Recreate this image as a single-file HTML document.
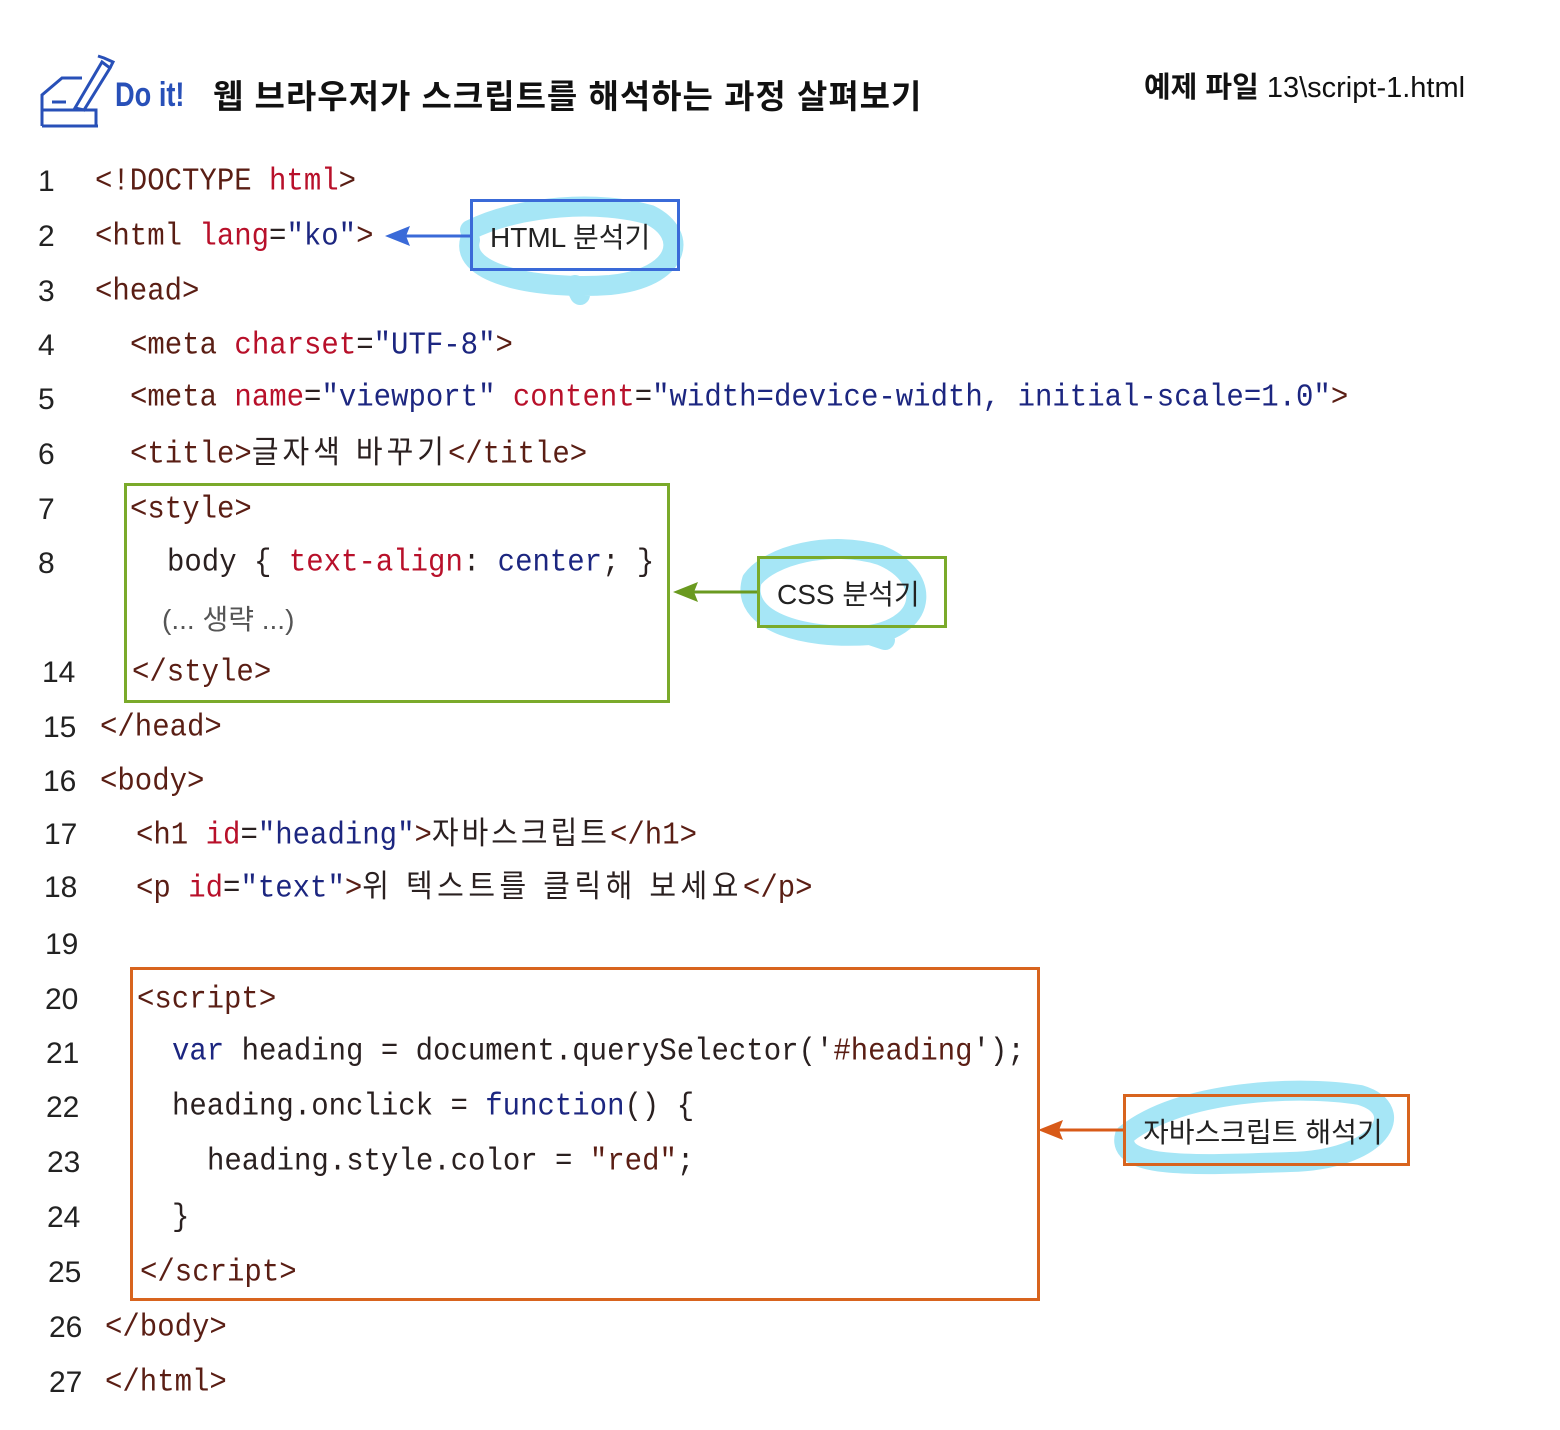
<!DOCTYPE html>
<html><head><meta charset="utf-8"><style>
body{margin:0;width:1560px;height:1430px;background:#fff;position:relative;overflow:hidden;font-family:"Liberation Mono","Noto Sans CJK KR",monospace;}
.l{position:absolute;font-size:29px;line-height:40px;white-space:pre;color:#2a2020;transform:scaleY(1.08);transform-origin:left center}
.n{position:absolute;font-family:"Liberation Sans",sans-serif;font-size:30px;line-height:40px;color:#222}
.t{color:#5a1e14}.a{color:#b8102a}.v{color:#1c2680}
.k{font-family:"Liberation Sans","Noto Sans CJK KR",sans-serif;letter-spacing:4px}
.box{position:absolute;border:3px solid}
.lab{position:absolute;font-family:"Liberation Sans","Noto Sans CJK KR",sans-serif;font-size:28px;color:#222;white-space:nowrap}
</style></head><body>
<svg style="position:absolute;left:0;top:0" width="1560" height="1430">
<g fill="none" stroke="#a6e6f6" stroke-width="20" stroke-linecap="round">
<path d="M470 240 C460 275 540 290 610 285 C680 278 690 235 650 215 C600 200 520 205 470 230 M575 285 L580 295"/>
<path d="M752 580 C740 620 800 640 870 635 C930 625 930 575 880 555 C830 540 770 555 752 580 M870 635 L885 640"/>
<path d="M1125 1135 C1115 1170 1200 1165 1290 1162 C1380 1160 1410 1110 1360 1095 C1300 1085 1180 1090 1125 1135"/>
</g>
<g fill="none" stroke="#2850b8" stroke-width="3">
<path d="M42 126 V95 L62 78 H82 M42 110 H96 V126 M42 126 H98 M52 102 H66"/>
<path d="M75 108 L102 62 L110 68 L84 110 Z M98 56 L104 58 L113 62 L110 68"/>
</g>
<path d="M470 236 H400" stroke="#3a6ad8" stroke-width="3"/><path d="M385 236 L410 226 L406 236 L410 246 Z" fill="#3a6ad8"/>
<path d="M758 592 H690" stroke="#6a9a20" stroke-width="3"/><path d="M673 592 L698 582 L694 592 L698 602 Z" fill="#6a9a20"/>
<path d="M1124 1130 H1055" stroke="#d85a18" stroke-width="3"/><path d="M1038 1130 L1063 1120 L1059 1130 L1063 1140 Z" fill="#d85a18"/>
</svg>
<div style="position:absolute;left:115px;top:76px;font-family:'Liberation Sans',sans-serif;font-weight:bold;font-size:34px;color:#2850b8;transform:scaleX(.8);transform-origin:left">Do it!</div>
<div class="lab" style="left:213px;top:70px;font-size:33px;font-weight:bold;color:#111;letter-spacing:1px">웹 브라우저가 스크립트를 해석하는 과정 살펴보기</div>
<div class="lab" style="left:1144px;top:64px;font-size:29px;color:#111"><b>예제 파일</b> 13\script-1.html</div>

<div class="box" style="left:470px;top:199px;width:204px;height:66px;border-color:#3a6ad8"></div>
<div class="lab" style="left:490px;top:216px">HTML 분석기</div>
<div class="box" style="left:124px;top:483px;width:540px;height:214px;border-color:#7aaa2a"></div>
<div class="box" style="left:757px;top:556px;width:184px;height:66px;border-color:#7aaa2a"></div>
<div class="lab" style="left:777px;top:573px">CSS 분석기</div>
<div class="box" style="left:130px;top:967px;width:904px;height:328px;border-color:#d8641e"></div>
<div class="box" style="left:1123px;top:1094px;width:281px;height:66px;border-color:#d8641e"></div>
<div class="lab" style="left:1143px;top:1111px">자바스크립트 해석기</div>

<div class="n" style="left:38px;top:162px">1</div><div class="l" style="left:95px;top:162px"><span class="t">&lt;!DOCTYPE </span><span class="a">html</span><span class="t">&gt;</span></div>
<div class="n" style="left:38px;top:217px">2</div><div class="l" style="left:95px;top:217px"><span class="t">&lt;html </span><span class="a">lang</span>=<span class="v">"ko"</span><span class="t">&gt;</span></div>
<div class="n" style="left:38px;top:272px">3</div><div class="l" style="left:95px;top:272px"><span class="t">&lt;head&gt;</span></div>
<div class="n" style="left:38px;top:326px">4</div><div class="l" style="left:130px;top:326px"><span class="t">&lt;meta </span><span class="a">charset</span>=<span class="v">"UTF-8"</span><span class="t">&gt;</span></div>
<div class="n" style="left:38px;top:380px">5</div><div class="l" style="left:130px;top:378px"><span class="t">&lt;meta </span><span class="a">name</span>=<span class="v">"viewport"</span> <span class="a">content</span>=<span class="v">"width=device-width, initial-scale=1.0"</span><span class="t">&gt;</span></div>
<div class="n" style="left:38px;top:435px">6</div><div class="l" style="left:130px;top:433px"><span class="t">&lt;title&gt;</span><span class="k">글자색 바꾸기</span><span class="t">&lt;/title&gt;</span></div>
<div class="n" style="left:38px;top:490px">7</div><div class="l" style="left:130px;top:490px"><span class="t">&lt;style&gt;</span></div>
<div class="n" style="left:38px;top:544px">8</div><div class="l" style="left:167px;top:543px">body { <span class="a">text-align</span>: <span class="v">center</span>; }</div>
<div class="lab" style="left:162px;top:598px;font-size:28px;color:#555">(... 생략 ...)</div>
<div class="n" style="left:42px;top:653px">14</div><div class="l" style="left:132px;top:653px"><span class="t">&lt;/style&gt;</span></div>
<div class="n" style="left:43px;top:708px">15</div><div class="l" style="left:100px;top:708px"><span class="t">&lt;/head&gt;</span></div>
<div class="n" style="left:43px;top:762px">16</div><div class="l" style="left:100px;top:762px"><span class="t">&lt;body&gt;</span></div>
<div class="n" style="left:44px;top:815px">17</div><div class="l" style="left:136px;top:814px"><span class="t">&lt;h1 </span><span class="a">id</span>=<span class="v">"heading"</span><span class="t">&gt;</span><span class="k" style="letter-spacing:3px">자바스크립트</span><span class="t">&lt;/h1&gt;</span></div>
<div class="n" style="left:44px;top:868px">18</div><div class="l" style="left:136px;top:867px"><span class="t">&lt;p </span><span class="a">id</span>=<span class="v">"text"</span><span class="t">&gt;</span><span class="k" style="letter-spacing:4.5px">위 텍스트를 클릭해 보세요</span><span class="t">&lt;/p&gt;</span></div>
<div class="n" style="left:45px;top:925px">19</div>
<div class="n" style="left:45px;top:980px">20</div><div class="l" style="left:137px;top:980px"><span class="t">&lt;script&gt;</span></div>
<div class="n" style="left:46px;top:1034px">21</div><div class="l" style="left:172px;top:1032px"><span class="v">var</span> heading = document.querySelector('<span class="t">#heading</span>');</div>
<div class="n" style="left:46px;top:1088px">22</div><div class="l" style="left:172px;top:1087px">heading.onclick = <span class="v">function</span>() {</div>
<div class="n" style="left:47px;top:1143px">23</div><div class="l" style="left:207px;top:1142px">heading.style.color = <span class="t">"red"</span>;</div>
<div class="n" style="left:47px;top:1198px">24</div><div class="l" style="left:172px;top:1198px">}</div>
<div class="n" style="left:48px;top:1253px">25</div><div class="l" style="left:140px;top:1253px"><span class="t">&lt;/script&gt;</span></div>
<div class="n" style="left:49px;top:1308px">26</div><div class="l" style="left:105px;top:1308px"><span class="t">&lt;/body&gt;</span></div>
<div class="n" style="left:49px;top:1363px">27</div><div class="l" style="left:105px;top:1363px"><span class="t">&lt;/html&gt;</span></div>
</body></html>
